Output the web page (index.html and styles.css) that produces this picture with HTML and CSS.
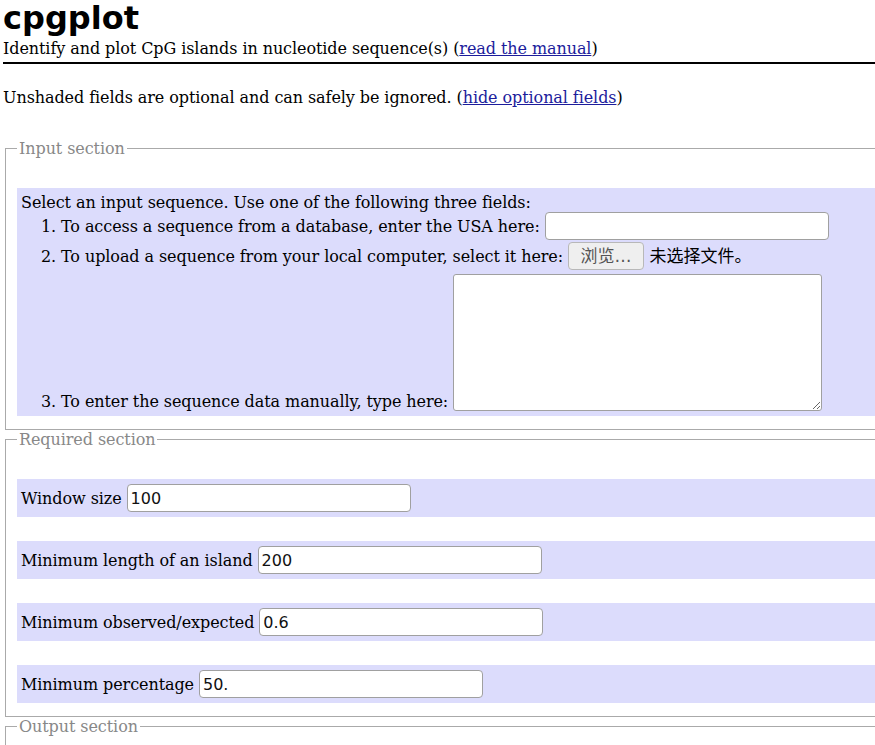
FILE: index.html
```html
<!DOCTYPE html>
<html lang="en">
<head>
<meta charset="utf-8">
<title>cpgplot</title>
<link rel="stylesheet" href="styles.css">
</head>
<body>
<div class="page">
  <h1 class="title">cpgplot</h1>
  <p class="subtitle">Identify and plot CpG islands in nucleotide sequence(s) (<a href="#">read the manual</a>)</p>
  <hr class="rule">
  <p class="note">Unshaded fields are optional and can safely be ignored. (<a href="#">hide optional fields</a>)</p>

  <form class="form">
    <fieldset class="section">
      <legend class="legend">Input section</legend>
      <div class="row">
        Select an input sequence. Use one of the following three fields:
        <ol class="choices">
          <li>To access a sequence from a database, enter the USA here: <input class="field" type="text"></li>
          <li>To upload a sequence from your local computer, select it here: <span class="file"><span class="file-btn">浏览…</span> <span class="file-text">未选择文件。</span></span></li>
          <li>To enter the sequence data manually, type here: <textarea class="area"></textarea></li>
        </ol>
      </div>
    </fieldset>

    <fieldset class="section">
      <legend class="legend">Required section</legend>
      <div class="row">Window size <input class="field" type="text" value="100"></div>
      <div class="row">Minimum length of an island <input class="field" type="text" value="200"></div>
      <div class="row">Minimum observed/expected <input class="field" type="text" value="0.6"></div>
      <div class="row">Minimum percentage <input class="field" type="text" value="50."></div>
    </fieldset>

    <fieldset class="section">
      <legend class="legend">Output section</legend>
      <div class="row">Output file <input class="field" type="text" value="cpgplot.cpgplot"></div>
    </fieldset>
  </form>
</div>
</body>
</html>
```

FILE: styles.css
```css
html {
  overflow: hidden;
}
body {
  margin: 0 0 0 3px;
  font-family: "DejaVu Serif", serif;
  font-size: 16px;
  letter-spacing: -0.08px;
  color: #000;
  background: #fff;
}
.page {
  width: 940px;
}
a {
  color: #1c1c9c;
}
.title {
  margin: 0;
  font-family: "DejaVu Sans", sans-serif;
  font-weight: bold;
  font-size: 32px;
  line-height: 37px;
  letter-spacing: 0;
}
.subtitle {
  margin: 2px 0 0;
}
.rule {
  margin: 4px 0 0;
  border: 0;
  height: 2px;
  background: #000;
}
.note {
  margin: 24px 0 0;
}
.form {
  margin: 32px 0 0;
}
.section {
  margin: 0 2px;
  border: 1px solid #aaa;
  padding: 0 11px 13px;
}
.legend {
  color: #888;
  padding: 0 2px;
}
.row {
  margin-top: 30px;
  background: #dcdcfc;
  padding: 5px 4px;
}
.row + .row {
  margin-top: 24px;
}
.choices {
  margin: 0;
  padding-left: 40px;
}
.field {
  box-sizing: border-box;
  width: 284px;
  height: 28px;
  padding: 0 3px;
  border: 1px solid #a0a0a0;
  border-radius: 4px;
  background: #fff;
  font-family: "DejaVu Sans", sans-serif;
  font-size: 16px;
  letter-spacing: 0;
  color: #111;
}
.file {
  font-family: "DejaVu Sans", "Noto Sans CJK SC", sans-serif;
  font-size: 17px;
  line-height: 20px;
  letter-spacing: 0;
}
.file-btn {
  display: inline-block;
  box-sizing: border-box;
  width: 76px;
  height: 28px;
  margin-top: 2px;
  line-height: 26px;
  text-align: center;
  border: 1px solid #b8b8b8;
  border-radius: 4px;
  background: #efefef;
  color: #555;
  vertical-align: baseline;
}
.area {
  box-sizing: border-box;
  width: 369px;
  height: 137px;
  margin: 4px 0 0;
  border: 1px solid #a0a0a0;
  border-radius: 3px;
  background: #fff;
  vertical-align: bottom;
}
```
